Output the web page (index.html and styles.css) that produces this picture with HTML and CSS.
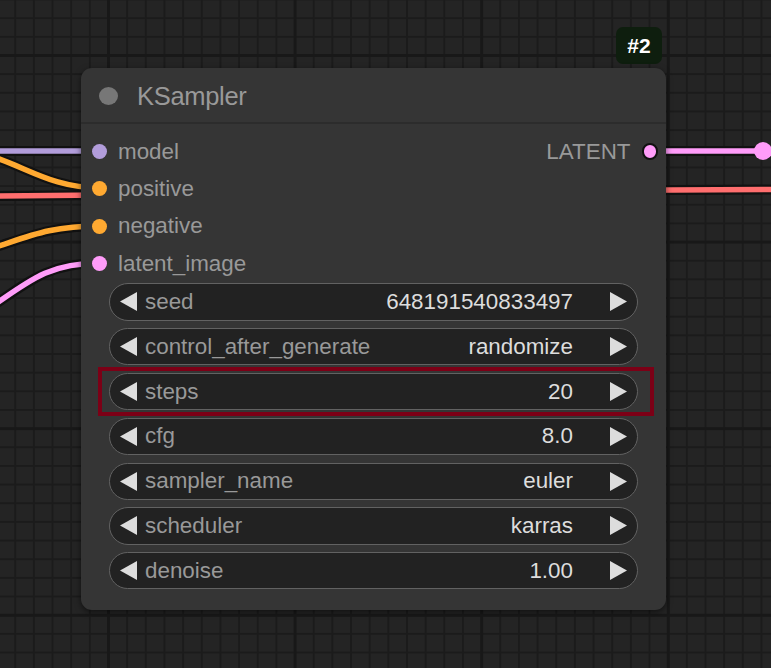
FILE: index.html
```html
<!DOCTYPE html>
<html>
<head>
<meta charset="utf-8">
<link rel="stylesheet" href="styles.css">
</head>
<body>
<div class="canvas">
  <svg class="wires" width="771" height="668" viewBox="0 0 771 668">
    <g class="outline">
      <path d="M-10 151 H100"/>
      <path d="M-40 150 C 15 155, 40 188, 100 188"/>
      <path d="M-10 196 C 200 195, 500 190, 780 189.5"/>
      <path d="M-10 249 C 30 236, 50 226, 100 226"/>
      <path d="M-10 308 C 30 280, 50 263, 100 263"/>
      <path d="M650 151 H763"/>
    </g>
    <path class="w model" d="M-10 151 H100"/>
    <path class="w orange" d="M-40 150 C 15 155, 40 188, 100 188"/>
    <path class="w red" d="M-10 196 C 200 195, 500 190, 780 189.5"/>
    <path class="w orange" d="M-10 249 C 30 236, 50 226, 100 226"/>
    <path class="w pink" d="M-10 308 C 30 280, 50 263, 100 263"/>
    <path class="w pink" d="M650 151 H763"/>
    <circle cx="763" cy="151" r="9" class="enddot"/>
  </svg>

  <div class="badge">#2</div>

  <div class="node">
    <div class="title">
      <span class="title-dot"></span>
      <span class="title-text">KSampler</span>
    </div>
    <div class="body">
      <div class="slots">
        <div class="slot-row">
          <div class="in"><span class="sdot c-model"></span>model</div>
          <div class="out">LATENT<span class="odot"></span></div>
        </div>
        <div class="slot-row">
          <div class="in"><span class="sdot c-orange"></span>positive</div>
        </div>
        <div class="slot-row">
          <div class="in"><span class="sdot c-orange"></span>negative</div>
        </div>
        <div class="slot-row">
          <div class="in"><span class="sdot c-pink"></span>latent_image</div>
        </div>
      </div>
      <div class="widgets">
        <div class="widget">
          <svg class="arrow" viewBox="0 0 17 19"><polygon points="0,9.5 17,0 17,19"/></svg>
          <span class="label">seed</span>
          <span class="value">648191540833497</span>
          <svg class="arrow" viewBox="0 0 17 19"><polygon points="17,9.5 0,0 0,19"/></svg>
        </div>
        <div class="widget">
          <svg class="arrow" viewBox="0 0 17 19"><polygon points="0,9.5 17,0 17,19"/></svg>
          <span class="label">control_after_generate</span>
          <span class="value">randomize</span>
          <svg class="arrow" viewBox="0 0 17 19"><polygon points="17,9.5 0,0 0,19"/></svg>
        </div>
        <div class="widget selected">
          <svg class="arrow" viewBox="0 0 17 19"><polygon points="0,9.5 17,0 17,19"/></svg>
          <span class="label">steps</span>
          <span class="value">20</span>
          <svg class="arrow" viewBox="0 0 17 19"><polygon points="17,9.5 0,0 0,19"/></svg>
        </div>
        <div class="widget">
          <svg class="arrow" viewBox="0 0 17 19"><polygon points="0,9.5 17,0 17,19"/></svg>
          <span class="label">cfg</span>
          <span class="value">8.0</span>
          <svg class="arrow" viewBox="0 0 17 19"><polygon points="17,9.5 0,0 0,19"/></svg>
        </div>
        <div class="widget">
          <svg class="arrow" viewBox="0 0 17 19"><polygon points="0,9.5 17,0 17,19"/></svg>
          <span class="label">sampler_name</span>
          <span class="value">euler</span>
          <svg class="arrow" viewBox="0 0 17 19"><polygon points="17,9.5 0,0 0,19"/></svg>
        </div>
        <div class="widget">
          <svg class="arrow" viewBox="0 0 17 19"><polygon points="0,9.5 17,0 17,19"/></svg>
          <span class="label">scheduler</span>
          <span class="value">karras</span>
          <svg class="arrow" viewBox="0 0 17 19"><polygon points="17,9.5 0,0 0,19"/></svg>
        </div>
        <div class="widget">
          <svg class="arrow" viewBox="0 0 17 19"><polygon points="0,9.5 17,0 17,19"/></svg>
          <span class="label">denoise</span>
          <span class="value">1.00</span>
          <svg class="arrow" viewBox="0 0 17 19"><polygon points="17,9.5 0,0 0,19"/></svg>
        </div>
      </div>
    </div>
  </div>
</div>
</body>
</html>
```

FILE: styles.css
```css
html, body {
  margin: 0;
  padding: 0;
  background: #222;
}

.canvas {
  position: relative;
  width: 771px;
  height: 668px;
  overflow: hidden;
  font-family: "Liberation Sans", Arial, sans-serif;
  background-color: #242424;
  background-image:
    linear-gradient(to right, #181818 0 3px, transparent 3px),
    linear-gradient(to bottom, #181818 0 3px, transparent 3px),
    linear-gradient(to right, #1b1b1b 0 2px, transparent 2px),
    linear-gradient(to bottom, #1b1b1b 0 2px, transparent 2px);
  background-size: 186.6px 186.6px, 186.6px 186.6px, 18.66px 18.66px, 18.66px 18.66px;
  background-position: 107px 54px, 107px 54px, 107.5px 54.5px, 107.5px 54.5px;
}

.wires {
  position: absolute;
  left: 0;
  top: 0;
  z-index: 0;
}

.wires .outline path {
  fill: none;
  stroke: #111;
  stroke-width: 10;
}

.wires .w {
  fill: none;
  stroke-width: 5.5;
}

.wires .model { stroke: #b29ddb; }
.wires .orange { stroke: #ffa931; }
.wires .red { stroke: #ff6e6e; }
.wires .pink { stroke: #ff9cf9; }
.wires .enddot { fill: #ff9cf9; }

.badge {
  position: absolute;
  left: 616px;
  top: 27px;
  width: 46px;
  height: 37px;
  border-radius: 7px;
  background: #0e1e0e;
  color: #fff;
  font-size: 21px;
  font-weight: bold;
  display: flex;
  align-items: center;
  justify-content: center;
  z-index: 1;
}

.node {
  position: absolute;
  left: 81px;
  top: 68px;
  width: 585px;
  height: 542px;
  background: #353535;
  border-radius: 11px;
  box-shadow: 0 2px 6px rgba(0, 0, 0, 0.55);
  z-index: 2;
  display: flex;
  flex-direction: column;
}

.title {
  height: 56px;
  box-sizing: border-box;
  padding-top: 3px;
  border-bottom: 2px solid #2c2c2c;
  display: flex;
  align-items: center;
  padding-left: 18px;
  gap: 19px;
}

.title-dot {
  width: 19px;
  height: 18px;
  border-radius: 50%;
  background: #777;
  margin-top: -2px;
}

.title-text {
  font-size: 25.5px;
  color: #999;
  letter-spacing: -0.3px;
}

.body {
  padding-top: 9px;
  display: flex;
  flex-direction: column;
}

.slots {
  display: flex;
  flex-direction: column;
}

.slot-row {
  height: 37.33px;
  display: flex;
  align-items: center;
  justify-content: space-between;
  font-size: 22.4px;
  color: #999;
}

.in {
  display: flex;
  align-items: center;
  padding-left: 11px;
  gap: 11px;
}

.sdot {
  width: 15px;
  height: 15px;
  border-radius: 50%;
  display: inline-block;
}

.c-model { background: #b29ddb; }
.c-orange { background: #ffa931; }
.c-pink { background: #ff9cf9; }

.out {
  display: flex;
  align-items: center;
  padding-right: 8px;
  gap: 11px;
}

.odot {
  width: 12.5px;
  height: 12.5px;
  border-radius: 50%;
  background: #ff9cf9;
  border: 2px solid #111;
  display: inline-block;
}

.widgets {
  margin-top: 1px;
  padding: 0 28px;
  display: flex;
  flex-direction: column;
  gap: 7.47px;
}

.widget {
  position: relative;
  height: 37.33px;
  box-sizing: border-box;
  border: 1.5px solid #626262;
  border-radius: 19px;
  background: #222;
  display: flex;
  align-items: center;
  padding: 0 10px 0 10px;
  font-size: 22.4px;
}

.arrow {
  width: 17px;
  height: 19px;
  flex: none;
}

.arrow polygon {
  fill: #ddd;
}

.label {
  color: #999;
  margin-left: 8px;
  flex: 1;
}

.value {
  color: #ddd;
  margin-right: 37px;
}

.selected::after {
  content: "";
  position: absolute;
  left: -12px;
  right: -17px;
  top: -6.5px;
  bottom: -7px;
  border: 4px solid #7c0016;
  pointer-events: none;
}
```
